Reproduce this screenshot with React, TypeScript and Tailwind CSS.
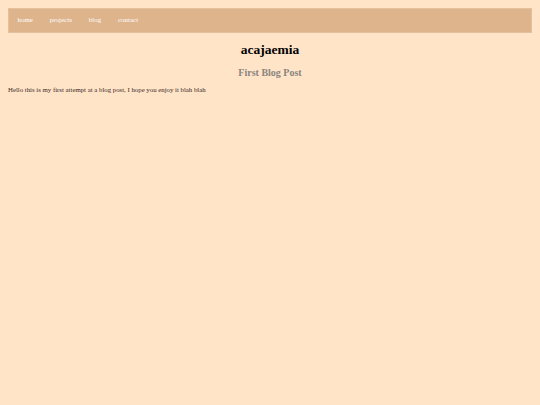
export default function App() {
  return (
    <div className="min-h-[405px] bg-[#ffe4c8] p-[8px] font-['Liberation_Serif',serif]">
      <nav className="flex h-[25px] items-center border border-[#e4c09c] bg-[#ddb48c]">
        {["home", "projects", "blog", "contact"].map((t) => (
          <span key={t} className="px-[8.4px] text-[7px] leading-none text-white">
            {t}
          </span>
        ))}
      </nav>
      <h1 className="mt-[10px] text-center text-[13.5px] font-bold leading-none text-black">acajaemia</h1>
      <h2 className="mt-[11px] text-center text-[10px] font-bold leading-none text-[#8a8580]">First Blog Post</h2>
      <p className="mt-[9px] text-[6.8px] leading-none text-[#3a2a1e]">
        Hello this is my first attempt at a blog post, I hope you enjoy it blah blah
      </p>
    </div>
  );
}
